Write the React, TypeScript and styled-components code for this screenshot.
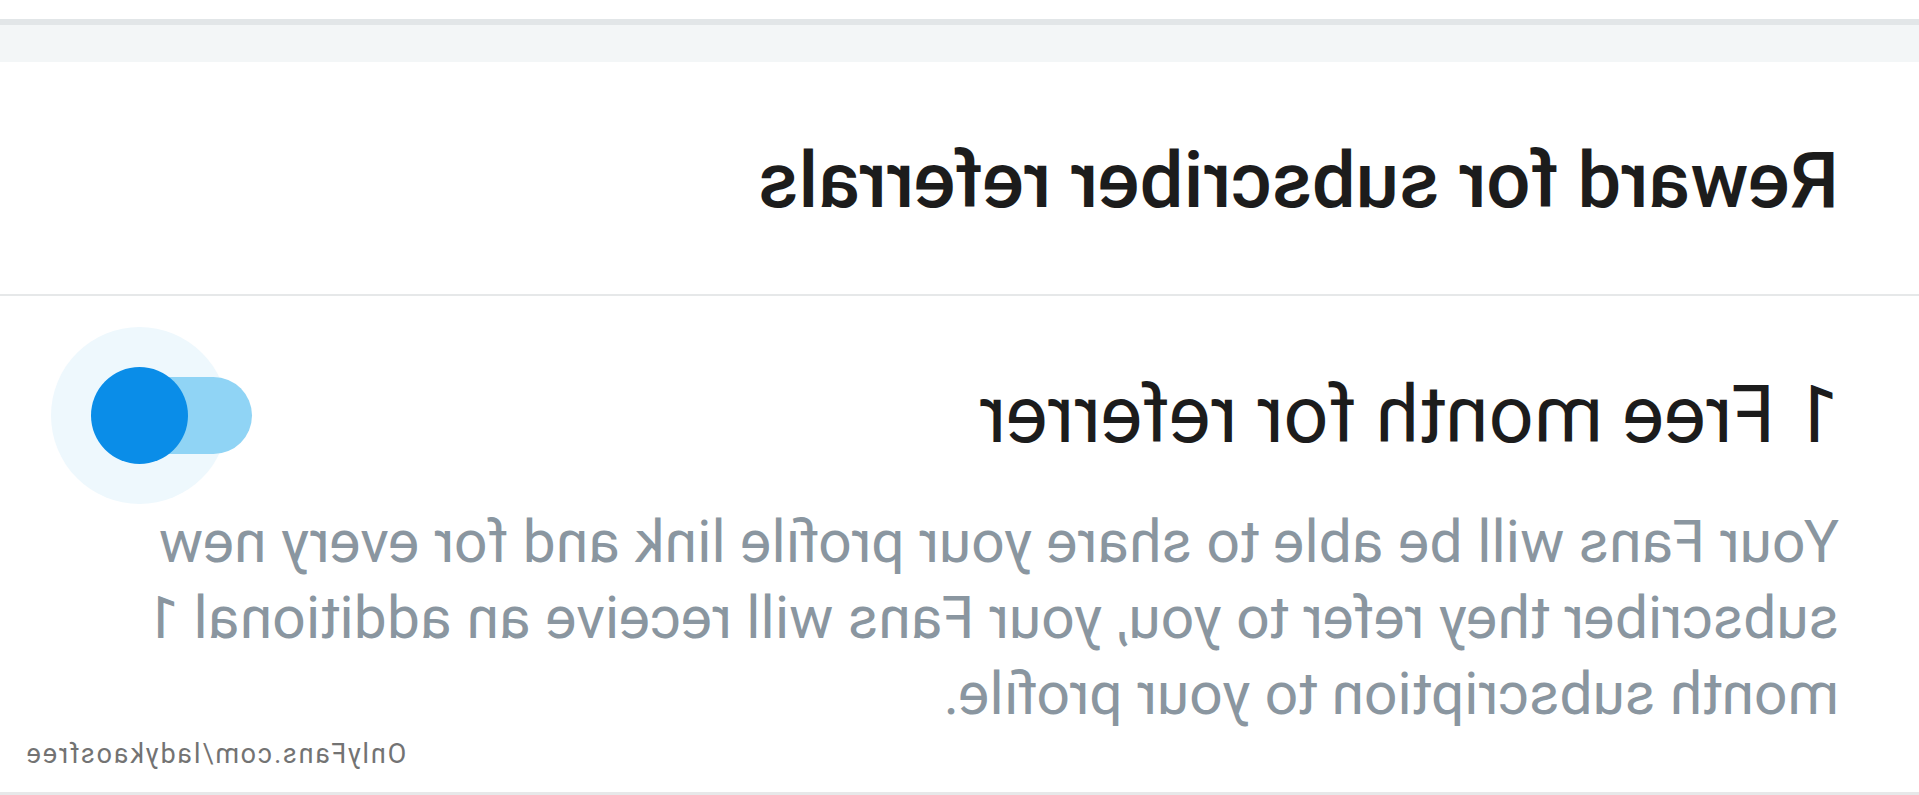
import React from "react";
import styled, { createGlobalStyle } from "styled-components";

const Global = createGlobalStyle`
  html, body {
    margin: 0;
    padding: 0;
    background: #ffffff;
  }
  body {
    font-family: Roboto, "Noto Sans", "Liberation Sans", Arial, sans-serif;
    overflow: hidden;
  }
`;

const Page = styled.div`
  position: relative;
  width: 1919px;
  height: 795px;
  box-sizing: border-box;
  background: #ffffff;
  display: flex;
  flex-direction: column;
  overflow: hidden;
  border-bottom: 3px solid #e7e8e9;
  transform: scaleX(-1);
`;

const TopGap = styled.div`
  height: 19px;
  flex-shrink: 0;
`;

const Band = styled.div`
  height: 43px;
  box-sizing: border-box;
  flex-shrink: 0;
  background: #f3f6f7;
  border-top: 6px solid #e2e6e8;
`;

const HeadingSection = styled.header`
  height: 234px;
  box-sizing: border-box;
  flex-shrink: 0;
  padding: 71px 80px 0;
  border-bottom: 2px solid #e6e8e9;
`;

const Heading = styled.h2`
  margin: 0;
  font-size: 78px;
  line-height: 95px;
  font-weight: 500;
  color: #1c1c1c;
  white-space: nowrap;
`;

const Body = styled.section`
  flex: 1;
  padding: 71px 80px 0;
  display: flex;
  flex-direction: column;
  gap: 40px;
`;

const Row = styled.div`
  display: flex;
  align-items: center;
  justify-content: space-between;
  height: 97px;
`;

const Title = styled.h3`
  margin: 0;
  font-size: 79px;
  line-height: 95px;
  font-weight: 400;
  color: #1c1c1c;
  white-space: nowrap;
`;

const Switch = styled.div`
  position: relative;
  width: 161px;
  height: 97px;
  margin-right: 11px;
  flex-shrink: 0;
`;

const Halo = styled.span`
  position: absolute;
  left: 24px;
  top: -40px;
  width: 177px;
  height: 177px;
  border-radius: 50%;
  background: #eef8fd;
`;

const Track = styled.span`
  position: absolute;
  left: 0;
  top: 10px;
  width: 150px;
  height: 77px;
  border-radius: 39px;
  background: #90d4f5;
`;

const Knob = styled.span`
  position: absolute;
  left: 64px;
  top: 0;
  width: 97px;
  height: 97px;
  border-radius: 50%;
  background: #0a8de8;
`;

const Description = styled.p`
  margin: 0;
  font-size: 58.8px;
  line-height: 76px;
  font-weight: 400;
  color: #8a96a0;
`;

const Watermark = styled.span`
  position: absolute;
  right: 25px;
  top: 741px;
  font-size: 27px;
  line-height: 26px;
  letter-spacing: 1.8px;
  color: #737373;
  white-space: nowrap;
`;

export default function App() {
  return (
    <>
      <Global />
      <Page>
        <TopGap />
        <Band />
        <HeadingSection>
          <Heading>Reward for subscriber referrals</Heading>
        </HeadingSection>
        <Body>
          <Row>
            <Title>1 Free month for referrer</Title>
            <Switch>
              <Halo />
              <Track />
              <Knob />
            </Switch>
          </Row>
          <Description>
            Your Fans will be able to share your profile link and for every new
            subscriber they refer to you, your Fans will receive an additional 1
            month subscription to your profile.
          </Description>
        </Body>
        <Watermark>OnlyFans.com/ladykaosfree</Watermark>
      </Page>
    </>
  );
}
